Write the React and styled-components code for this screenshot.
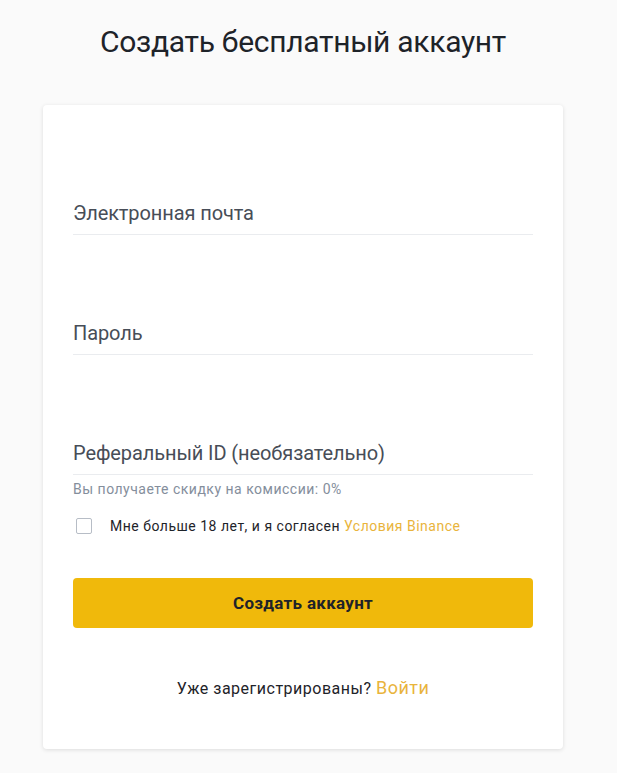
import React from "react";
import styled, { createGlobalStyle } from "styled-components";

const Global = createGlobalStyle`
  html, body { margin: 0; padding: 0; background: #fafafa; }
  body { font-family: Roboto, "Liberation Sans", sans-serif; color: #1e2329; }
  * { box-sizing: border-box; }
`;

const Page = styled.div`
  display: flex;
  flex-direction: column;
  align-items: center;
  padding: 22px 11px 0 0;
  min-height: 773px;
`;

const Title = styled.h1`
  margin: 0;
  font-size: 30px;
  line-height: 40px;
  font-weight: 400;
  letter-spacing: -0.3px;
  color: #1e2329;
`;

const Card = styled.div`
  margin-top: 43px;
  width: 520px;
  background: #fff;
  border-radius: 4px;
  box-shadow: 0 1px 4px rgba(0, 0, 0, 0.12);
  padding: 92px 30px 48px;
  display: flex;
  flex-direction: column;
`;

const Field = styled.div`
  margin-top: ${(p) => (p.$first ? 0 : 82)}px;
  padding-bottom: 5px;
  border-bottom: 1px solid #eaecef;
  font-size: 20px;
  line-height: 32px;
  letter-spacing: -0.1px;
  color: #474d57;
`;

const Hint = styled.div`
  margin-top: 4px;
  font-size: 14px;
  line-height: 20px;
  letter-spacing: 0.5px;
  color: #848e9c;
`;

const CheckRow = styled.label`
  margin-top: 17px;
  display: flex;
  align-items: center;
  gap: 18px;
  padding-left: 3px;
  font-size: 14px;
  line-height: 20px;
  letter-spacing: 0.5px;
  color: #1e2329;
`;

const Box = styled.span`
  width: 16px;
  height: 16px;
  border: 1.5px solid #b7bdc6;
  border-radius: 2px;
  flex: none;
`;

const Link = styled.span`
  color: #e9b43c;
  font-size: ${(p) => p.$size || "inherit"};
`;

const Button = styled.button`
  margin-top: 42px;
  height: 50px;
  border: none;
  border-radius: 4px;
  background: #f0b90b;
  color: #1e2329;
  font-family: inherit;
  font-size: 17px;
  font-weight: 700;
  letter-spacing: 0.3px;
`;

const Footer = styled.div`
  margin-top: 48px;
  text-align: center;
  font-size: 16px;
  line-height: 24px;
  letter-spacing: 0.5px;
  color: #1e2329;
`;

export default function App() {
  return (
    <>
      <Global />
      <Page>
        <Title>Создать бесплатный аккаунт</Title>
        <Card>
          <Field $first>Электронная почта</Field>
          <Field>Пароль</Field>
          <Field>Реферальный ID (необязательно)</Field>
          <Hint>Вы получаете скидку на комиссии: 0%</Hint>
          <CheckRow>
            <Box />
            <span>
              Мне больше 18 лет, и я согласен <Link>Условия Binance</Link>
            </span>
          </CheckRow>
          <Button>Создать аккаунт</Button>
          <Footer>
            Уже зарегистрированы? <Link $size="18px">Войти</Link>
          </Footer>
        </Card>
      </Page>
    </>
  );
}
